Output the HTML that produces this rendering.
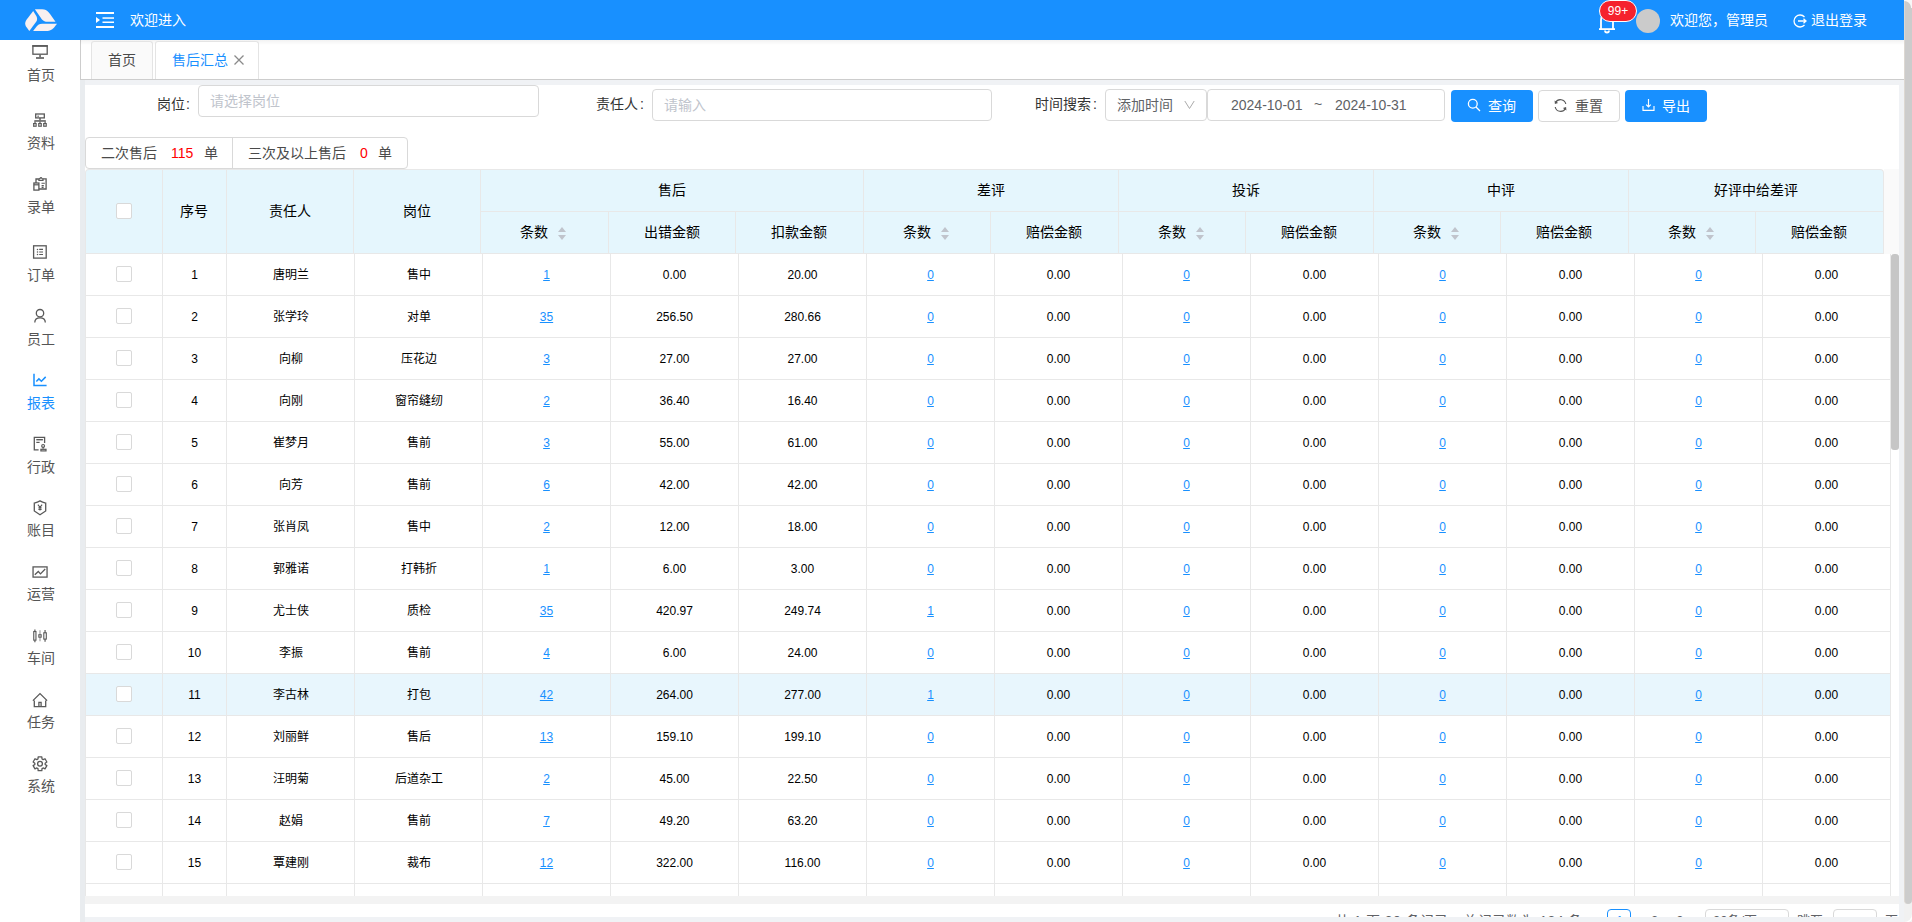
<!DOCTYPE html><html lang="zh-CN"><head><meta charset="utf-8"><style>
*{box-sizing:border-box;margin:0;padding:0}
html,body{width:1912px;height:922px;overflow:hidden}
body{position:relative;background:#f0f2f5;font-family:"Liberation Sans",sans-serif;font-size:14px;color:#000}
.a{position:absolute}
.hdr{left:0;top:0;width:1904px;height:40px;background:#1890ff;color:#fff}
.side{left:0;top:40px;width:80px;height:882px;background:#fff}
.tabs{left:80px;top:40px;width:1824px;height:40px;background:#fff;border-left:1px solid #cdcdcd;border-bottom:1px solid #cdcdcd}
.card{left:85px;top:85px;width:1814px;height:832px;background:#fff}
.txt{white-space:nowrap;line-height:1}
.inp{border:1px solid #d9d9d9;border-radius:4px;background:#fff}
.ph{color:#c0c4cc}
.btn{border-radius:4px;color:#fff;background:#1890ff;font-size:14px}
.lk{color:#1890ff;text-decoration:underline}
</style></head><body><div class="a hdr"></div><svg class="a" style="left:16px;top:0" width="44" height="40" viewBox="16 0 44 40"><g fill="#f9f0f0">
<path d="M33.2 11 L36.3 16 C37 17.2 37.1 18.2 37.1 19 C37.1 20.2 36.8 21 36.2 21.8 L29.3 31 L26.6 27.3 C25.7 26 25.2 24.8 25.2 23.4 C25.2 22 25.8 20.8 26.7 19.5 Z"/>
<path d="M34.85 9.2 L42.2 9.2 C45 9.2 47 10.4 48.6 12.2 C50 13.8 51 15.3 51.8 16.6 L55.5 21.7 L47.4 21.7 C45.3 21.7 43.5 21 42 19.4 C41.4 18.8 41 18.2 40.6 17.6 Z"/>
<path d="M33.1 31 L36.6 26.4 C37.8 24.9 39.3 23.7 42.2 23.7 L57 23.7 L54.3 27.2 C52.8 29 50.6 31 46 31 Z"/>
</g></svg><svg class="a" style="left:96px;top:12px" width="18" height="16" viewBox="0 0 18 16"><g fill="#fff">
<rect x="0" y="0" width="18" height="2"/><rect x="6.5" y="5.3" width="11.5" height="1.5"/><rect x="6.5" y="9.5" width="11.5" height="1.5"/><rect x="0" y="14" width="18" height="2"/>
<path d="M0 5 L4 8 L0 11 Z"/></g></svg><div class="a txt " style="left:130px;top:13px;color:#fff;font-size:14px">欢迎进入</div><svg class="a" style="left:1598px;top:10px" width="18" height="24" viewBox="0 0 18 24"><g fill="none" stroke="#fff" stroke-width="1.8">
<path d="M3 19 V10 C3 6 5.5 4 9 4 C12.5 4 15 6 15 10 V19"/><path d="M1 19.1 H17"/><path d="M7 20.5 A2 2 0 0 0 11 20.5"/></g></svg><div class="a " style="left:1599px;top:0px;width:38px;height:22px;background:#f5222d;border:1px solid #fff;border-radius:11px;color:#fff;font-size:12px;line-height:20px;text-align:center;font-weight:normal">99+</div><div class="a " style="left:1636px;top:9px;width:24px;height:24px;background:#cbcbcb;border-radius:50%"></div><div class="a txt " style="left:1670px;top:13px;color:#fff;font-size:14px">欢迎您，管理员</div><svg class="a" style="left:1792px;top:13px" width="16" height="16" viewBox="0 0 16 16"><g fill="none" stroke="#fff" stroke-width="1.3">
<path d="M12.5 4 A6 6 0 1 0 12.5 12"/><path d="M6 8 H14 M11.5 5.8 L14 8 L11.5 10.2"/></g></svg><div class="a txt " style="left:1811px;top:13px;color:#fff;font-size:14px">退出登录</div><div class="a " style="left:1904px;top:0px;width:8px;height:922px;background:#f1f1f1"></div><div class="a " style="left:1904px;top:0px;width:8px;height:904px;background:#cccccc;border-radius:0 0 4px 4px;border-left:1px solid #ddd8d2"></div><div class="a " style="left:1904px;top:0px;width:8px;height:8px;background:radial-gradient(circle at 0 8px, rgba(255,255,255,0) 6.5px, #f8f8f8 7.5px)"></div><div class="a " style="left:1904px;top:906px;width:8px;height:16px;background:#f1f1f1;border-radius:0 0 8px 0;box-shadow:1px 1px 0 #fff"></div><div class="a " style="left:0px;top:914px;width:8px;height:8px;background:radial-gradient(circle at 8px 0, #fff 6.5px, #e2e2e2 7.5px, #f6f6f6 8.5px)"></div><div class="a side"></div><svg class="a" style="left:0;top:0" width="80" height="800" viewBox="0 0 80 800"><g fill="none" stroke="#595959" stroke-width="1.3">
<rect x="32.9" y="45.8" width="14.3" height="8.4"/><path d="M32.3 46 H47.8" stroke-width="1.6"/>
<rect x="35.7" y="114" width="8.6" height="3.9"/><path d="M37.3 116.2 H39" stroke-width="1"/>
<path d="M35 121.5 V123.3 M40 121.5 V123.3 M45.1 121.5 V123.3" stroke-width="1.2"/>
<path d="M38.9 179 H36 V189 H46.1 V178.8 H43"/><path d="M38.9 180.4 H43 V179.2 C42.3 178.8 41.6 177.9 41 177.6 C40.4 177.9 39.7 178.8 38.9 179.2 Z" stroke-width="1.2"/>
<rect x="33.9" y="183" width="5" height="7.1" fill="#fff"/>
<path d="M41.5 183.2 H44.8 M41.6 185.6 H43.8 M41.6 187.4 H43.6" stroke-width="1.1"/>
<rect x="33.6" y="245.8" width="12.6" height="12.3"/>
<path d="M39.2 249.4 H43 M39.2 252 H43 M39.2 254.5 H43" stroke-width="1.1"/>
<circle cx="40" cy="313.2" r="3.7"/><path d="M34.8 322.6 C34.8 319.6 37 317.8 40 317.8 C43 317.8 45.3 319.6 45.3 322.6"/>
<path d="M34 373.8 V385.5 H46.6 M36.3 381.5 L38.9 378.9 L41.4 381.2 L45.7 376.9" stroke="#1890ff" stroke-width="1.5"/>
<path d="M44.6 442.9 V437.3 H34.3 V449.9 H38.6"/><circle cx="43.1" cy="445.9" r="1.4" stroke-width="1.2"/><path d="M43.1 447.3 V448.8" stroke-width="1.2"/><rect x="40.9" y="449.3" width="5.1" height="1.6" stroke-width="1.2"/>
<path d="M40 500.9 C38.5 501.8 36.5 502.6 34.3 503.1 V511 L40 514.8 L45.7 511 V503.1 C43.5 502.6 41.5 501.8 40 500.9 Z"/>
<path d="M37.9 504.6 L40 507.3 L42.1 504.6 M40 507.3 V510.6 M38.4 507.9 H41.6 M38.4 509.5 H41.6" stroke-width="1.1"/>
<rect x="33.05" y="566.9" width="14" height="10.2"/><path d="M34.8 574.7 L38.3 571.5 L40.5 573.9 L45.2 569"/>
<path d="M40 630.2 V641.3" stroke="#999" stroke-width="1.1"/>
<rect x="33.75" y="631.55" width="2.2" height="8.6" stroke-width="1.1"/><path d="M34.9 629.5 V631.6 M34.9 640.2 V642.3 M45.05 630 V632.9 M45.05 639 V641.8" stroke-width="1.2"/>
<rect x="38.85" y="634.75" width="2.3" height="2.4" fill="#fff" stroke-width="1.1"/><rect x="43.8" y="632.8" width="2.5" height="6.3" stroke-width="1.1"/>
<path d="M32.9 700.6 L40 693.6 L47.1 700.6 M34.3 700.4 V706.6 H45.7 V700.4 M38.9 706.6 V702.3 H41.1 V706.6"/>
<path d="M41.84 756.94 L38.16 756.94 L37.97 759.01 L36.87 759.65 L34.98 758.78 L33.14 761.96 L34.84 763.17 L34.84 764.43 L33.14 765.64 L34.98 768.82 L36.87 767.95 L37.97 768.59 L38.16 770.66 L41.84 770.66 L42.03 768.59 L43.13 767.95 L45.02 768.82 L46.86 765.64 L45.16 764.43 L45.16 763.17 L46.86 761.96 L45.02 758.78 L43.13 759.65 L42.03 759.01 Z" stroke-linejoin="round"/><circle cx="40" cy="763.8" r="2.4"/>
</g><g fill="#595959">
<rect x="39.3" y="54.8" width="1.5" height="2.4"/><rect x="36" y="57.2" width="8" height="1.6"/>
<rect x="39.3" y="118" width="1.4" height="2.3"/><rect x="34.3" y="120.2" width="11.5" height="1.5"/>
<rect x="33" y="123" width="3.7" height="3.8"/><rect x="38.15" y="123" width="3.7" height="3.8"/><rect x="43.1" y="123" width="3.7" height="3.8"/>
<rect x="33.9" y="184.2" width="5" height="1.2"/>
<circle cx="37.5" cy="249.4" r="0.75"/><circle cx="37.5" cy="252" r="0.75"/><circle cx="37.5" cy="254.5" r="0.75"/>
<rect x="36.3" y="439" width="6.6" height="1.4"/><rect x="36.3" y="441.8" width="3.3" height="1.2"/>
</g><g fill="#ddd"><rect x="33.8" y="124.3" width="2.1" height="1.2"/><rect x="38.95" y="124.3" width="2.1" height="1.2"/><rect x="43.9" y="124.3" width="2.1" height="1.2"/></g></svg><div class="a txt " style="left:0px;top:68px;width:81px;text-align:center;color:#555;font-size:14px">首页</div><div class="a txt " style="left:0px;top:136px;width:81px;text-align:center;color:#555;font-size:14px">资料</div><div class="a txt " style="left:0px;top:200px;width:81px;text-align:center;color:#555;font-size:14px">录单</div><div class="a txt " style="left:0px;top:268px;width:81px;text-align:center;color:#555;font-size:14px">订单</div><div class="a txt " style="left:0px;top:332px;width:81px;text-align:center;color:#555;font-size:14px">员工</div><div class="a txt " style="left:0px;top:396px;width:81px;text-align:center;color:#1890ff;font-size:14px">报表</div><div class="a txt " style="left:0px;top:460px;width:81px;text-align:center;color:#555;font-size:14px">行政</div><div class="a txt " style="left:0px;top:523px;width:81px;text-align:center;color:#555;font-size:14px">账目</div><div class="a txt " style="left:0px;top:587px;width:81px;text-align:center;color:#555;font-size:14px">运营</div><div class="a txt " style="left:0px;top:651px;width:81px;text-align:center;color:#555;font-size:14px">车间</div><div class="a txt " style="left:0px;top:715px;width:81px;text-align:center;color:#555;font-size:14px">任务</div><div class="a txt " style="left:0px;top:779px;width:81px;text-align:center;color:#555;font-size:14px">系统</div><div class="a tabs"></div><div class="a " style="left:80px;top:40px;width:1824px;height:5px;background:linear-gradient(rgba(0,0,0,0.05),rgba(0,0,0,0))"></div><div class="a " style="left:91px;top:41px;width:62px;height:38px;background:#fafafa;border:1px solid #e4e4e4;border-bottom:none;border-radius:3px 3px 0 0"></div><div class="a txt " style="left:108px;top:53px;color:#4a4a4a;font-size:14px">首页</div><div class="a " style="left:155px;top:41px;width:104px;height:38px;background:#fff;border:1px solid #e4e4e4;border-bottom:none;border-radius:3px 3px 0 0"></div><div class="a txt " style="left:172px;top:53px;color:#1890ff;font-size:14px">售后汇总</div><svg class="a" style="left:234px;top:55px" width="10" height="10" viewBox="0 0 10 10"><path d="M0.5 0.5 L9.5 9.5 M9.5 0.5 L0.5 9.5" stroke="#8a8a8a" stroke-width="1.3"/></svg><div class="a " style="left:80px;top:80px;width:5px;height:842px;background:#e9ecef"></div><div class="a card"></div><div class="a txt " style="left:157px;top:97px;color:#333;font-size:14px">岗位<span style="margin-left:1px">:</span></div><div class="a inp" style="left:198px;top:85px;width:341px;height:32px;"></div><div class="a txt ph" style="left:210px;top:94px;font-size:14px">请选择岗位</div><div class="a txt " style="left:596px;top:97px;color:#333;font-size:14px">责任人<span style="margin-left:2px">:</span></div><div class="a inp" style="left:652px;top:89px;width:340px;height:32px;"></div><div class="a txt ph" style="left:664px;top:98px;font-size:14px">请输入</div><div class="a txt " style="left:1035px;top:97px;color:#333;font-size:14px">时间搜索<span style="margin-left:2px">:</span></div><div class="a inp" style="left:1105px;top:89px;width:102px;height:32px;"></div><div class="a txt " style="left:1117px;top:98px;color:#606266;font-size:14px">添加时间</div><svg class="a" style="left:1184px;top:100px" width="11" height="10" viewBox="0 0 11 10"><path d="M0.8 1 L5.5 8.5 L10.2 1" fill="none" stroke="#aaa" stroke-width="1"/></svg><div class="a inp" style="left:1207px;top:89px;width:238px;height:32px;"></div><div class="a txt " style="left:1231px;top:98px;color:#606266;font-size:14px">2024-10-01</div><div class="a txt " style="left:1314px;top:97px;color:#606266;font-size:14px">~</div><div class="a txt " style="left:1335px;top:98px;color:#606266;font-size:14px">2024-10-31</div><div class="a btn" style="left:1451px;top:90px;width:82px;height:32px;"></div><svg class="a" style="left:1467px;top:98px" width="14" height="14" viewBox="0 0 14 14"><g fill="none" stroke="#fff" stroke-width="1.3"><circle cx="5.8" cy="5.8" r="4.4"/><path d="M9 9 L13 13"/></g></svg><div class="a txt " style="left:1488px;top:99px;color:#fff;font-size:14px">查询</div><div class="a " style="left:1538px;top:90px;width:82px;height:32px;background:#fff;border:1px solid #d9d9d9;border-radius:4px"></div><svg class="a" style="left:1553px;top:98px" width="15" height="15" viewBox="0 0 15 15"><g fill="none" stroke="#555" stroke-width="1.15"><path d="M12.8 6 A5.5 5.5 0 0 0 2.6 4.5"/><path d="M2.2 9 A5.5 5.5 0 0 0 12.4 10.5"/></g><path d="M1.6 2.6 L1.9 6 L5.1 5 Z M13.4 12.4 L13.1 9 L9.9 10 Z" fill="#555"/></svg><div class="a txt " style="left:1575px;top:99px;color:#555;font-size:14px">重置</div><div class="a btn" style="left:1625px;top:90px;width:82px;height:32px;"></div><svg class="a" style="left:1642px;top:98px" width="13" height="14" viewBox="0 0 13 14"><g fill="none" stroke="#fff" stroke-width="1.15"><path d="M6.5 1 V8.8 M4.2 6.6 L6.5 8.9 L8.8 6.6 M1 8 V12.4 H12 V8"/></g></svg><div class="a txt " style="left:1662px;top:99px;color:#fff;font-size:14px">导出</div><div class="a " style="left:85px;top:137px;width:323px;height:32px;border:1px solid #d9d9d9;border-radius:4px;background:#fff"></div><div class="a " style="left:232px;top:137px;width:1px;height:32px;background:#d9d9d9"></div><div class="a txt " style="left:101px;top:146px;color:#4a4a4a;font-size:14px">二次售后</div><div class="a txt " style="left:171px;top:146px;color:#f00;font-size:14px">115</div><div class="a txt " style="left:204px;top:146px;color:#4a4a4a;font-size:14px">单</div><div class="a txt " style="left:248px;top:146px;color:#4a4a4a;font-size:14px">三次及以上售后</div><div class="a txt " style="left:360px;top:146px;color:#f00;font-size:14px">0</div><div class="a txt " style="left:378px;top:146px;color:#4a4a4a;font-size:14px">单</div><div class="a" style="left:85px;top:169px;width:1799px;height:85px;background:#e5f6fd;border:1px solid #e8e8e8;border-bottom:none;border-radius:4px 4px 0 0"></div><div class="a" style="left:1884px;top:169px;width:15px;height:85px;background:#fafafa"></div><div class="a" style="left:85px;top:253px;width:1799px;height:1px;background:#e8e8e8"></div><div class="a" style="left:480px;top:211px;width:1403px;height:1px;background:#e8e8e8"></div><div class="a" style="left:162px;top:170px;width:1px;height:84px;background:#e8e8e8"></div><div class="a" style="left:226px;top:170px;width:1px;height:84px;background:#e8e8e8"></div><div class="a" style="left:353px;top:170px;width:1px;height:84px;background:#e8e8e8"></div><div class="a" style="left:480px;top:170px;width:1px;height:84px;background:#e8e8e8"></div><div class="a" style="left:863px;top:170px;width:1px;height:84px;background:#e8e8e8"></div><div class="a" style="left:1118px;top:170px;width:1px;height:84px;background:#e8e8e8"></div><div class="a" style="left:1373px;top:170px;width:1px;height:84px;background:#e8e8e8"></div><div class="a" style="left:1628px;top:170px;width:1px;height:84px;background:#e8e8e8"></div><div class="a" style="left:608px;top:212px;width:1px;height:42px;background:#e8e8e8"></div><div class="a" style="left:735px;top:212px;width:1px;height:42px;background:#e8e8e8"></div><div class="a" style="left:990px;top:212px;width:1px;height:42px;background:#e8e8e8"></div><div class="a" style="left:1245px;top:212px;width:1px;height:42px;background:#e8e8e8"></div><div class="a" style="left:1500px;top:212px;width:1px;height:42px;background:#e8e8e8"></div><div class="a" style="left:1755px;top:212px;width:1px;height:42px;background:#e8e8e8"></div><div class="a" style="left:116px;top:203px;width:16px;height:16px;background:#fff;border:1px solid #d9d9d9;border-radius:2px"></div><div class="a txt" style="left:162px;top:169px;width:64px;height:84px;display:flex;align-items:center;justify-content:center;font-size:14px;color:#000">序号</div><div class="a txt" style="left:226px;top:169px;width:127px;height:84px;display:flex;align-items:center;justify-content:center;font-size:14px;color:#000">责任人</div><div class="a txt" style="left:353px;top:169px;width:127px;height:84px;display:flex;align-items:center;justify-content:center;font-size:14px;color:#000">岗位</div><div class="a txt" style="left:480px;top:169px;width:383px;height:42px;display:flex;align-items:center;justify-content:center;font-size:14px;color:#000">售后</div><div class="a txt" style="left:863px;top:169px;width:255px;height:42px;display:flex;align-items:center;justify-content:center;font-size:14px;color:#000">差评</div><div class="a txt" style="left:1118px;top:169px;width:255px;height:42px;display:flex;align-items:center;justify-content:center;font-size:14px;color:#000">投诉</div><div class="a txt" style="left:1373px;top:169px;width:255px;height:42px;display:flex;align-items:center;justify-content:center;font-size:14px;color:#000">中评</div><div class="a txt" style="left:1628px;top:169px;width:255px;height:42px;display:flex;align-items:center;justify-content:center;font-size:14px;color:#000">好评中给差评</div><div class="a txt" style="left:480px;top:211px;width:128px;height:42px;display:flex;align-items:center;justify-content:center;font-size:14px;color:#000">条数<svg width="8" height="13" viewBox="0 0 8 13" style="margin-left:10px;margin-right:2px;margin-top:3px"><path d="M0 5 L4 0 L8 5 Z M0 8 L4 13 L8 8 Z" fill="#c0c4cc"/></svg></div><div class="a txt" style="left:608px;top:211px;width:127px;height:42px;display:flex;align-items:center;justify-content:center;font-size:14px;color:#000">出错金额</div><div class="a txt" style="left:735px;top:211px;width:128px;height:42px;display:flex;align-items:center;justify-content:center;font-size:14px;color:#000">扣款金额</div><div class="a txt" style="left:863px;top:211px;width:127px;height:42px;display:flex;align-items:center;justify-content:center;font-size:14px;color:#000">条数<svg width="8" height="13" viewBox="0 0 8 13" style="margin-left:10px;margin-right:2px;margin-top:3px"><path d="M0 5 L4 0 L8 5 Z M0 8 L4 13 L8 8 Z" fill="#c0c4cc"/></svg></div><div class="a txt" style="left:990px;top:211px;width:128px;height:42px;display:flex;align-items:center;justify-content:center;font-size:14px;color:#000">赔偿金额</div><div class="a txt" style="left:1118px;top:211px;width:127px;height:42px;display:flex;align-items:center;justify-content:center;font-size:14px;color:#000">条数<svg width="8" height="13" viewBox="0 0 8 13" style="margin-left:10px;margin-right:2px;margin-top:3px"><path d="M0 5 L4 0 L8 5 Z M0 8 L4 13 L8 8 Z" fill="#c0c4cc"/></svg></div><div class="a txt" style="left:1245px;top:211px;width:128px;height:42px;display:flex;align-items:center;justify-content:center;font-size:14px;color:#000">赔偿金额</div><div class="a txt" style="left:1373px;top:211px;width:127px;height:42px;display:flex;align-items:center;justify-content:center;font-size:14px;color:#000">条数<svg width="8" height="13" viewBox="0 0 8 13" style="margin-left:10px;margin-right:2px;margin-top:3px"><path d="M0 5 L4 0 L8 5 Z M0 8 L4 13 L8 8 Z" fill="#c0c4cc"/></svg></div><div class="a txt" style="left:1500px;top:211px;width:128px;height:42px;display:flex;align-items:center;justify-content:center;font-size:14px;color:#000">赔偿金额</div><div class="a txt" style="left:1628px;top:211px;width:127px;height:42px;display:flex;align-items:center;justify-content:center;font-size:14px;color:#000">条数<svg width="8" height="13" viewBox="0 0 8 13" style="margin-left:10px;margin-right:2px;margin-top:3px"><path d="M0 5 L4 0 L8 5 Z M0 8 L4 13 L8 8 Z" fill="#c0c4cc"/></svg></div><div class="a txt" style="left:1755px;top:211px;width:128px;height:42px;display:flex;align-items:center;justify-content:center;font-size:14px;color:#000">赔偿金额</div><div class="a" style="left:85px;top:295px;width:1806px;height:1px;background:#e8e8e8"></div><div class="a" style="left:116px;top:266px;width:16px;height:16px;background:#fff;border:1px solid #d9d9d9;border-radius:2px"></div><div class="a txt" style="left:162px;top:254px;width:64px;height:41px;display:flex;align-items:center;justify-content:center;font-size:12px;color:#000;padding-left:1px">1</div><div class="a txt" style="left:226px;top:254px;width:128px;height:41px;display:flex;align-items:center;justify-content:center;font-size:12px;color:#000;padding-left:1px">唐明兰</div><div class="a txt" style="left:354px;top:254px;width:128px;height:41px;display:flex;align-items:center;justify-content:center;font-size:12px;color:#000;padding-left:1px">售中</div><div class="a txt" style="left:482px;top:254px;width:128px;height:41px;display:flex;align-items:center;justify-content:center;font-size:12px;padding-left:1px"><span class="lk">1</span></div><div class="a txt" style="left:610px;top:254px;width:128px;height:41px;display:flex;align-items:center;justify-content:center;font-size:12px;color:#000;padding-left:1px">0.00</div><div class="a txt" style="left:738px;top:254px;width:128px;height:41px;display:flex;align-items:center;justify-content:center;font-size:12px;color:#000;padding-left:1px">20.00</div><div class="a txt" style="left:866px;top:254px;width:128px;height:41px;display:flex;align-items:center;justify-content:center;font-size:12px;padding-left:1px"><span class="lk">0</span></div><div class="a txt" style="left:994px;top:254px;width:128px;height:41px;display:flex;align-items:center;justify-content:center;font-size:12px;color:#000;padding-left:1px">0.00</div><div class="a txt" style="left:1122px;top:254px;width:128px;height:41px;display:flex;align-items:center;justify-content:center;font-size:12px;padding-left:1px"><span class="lk">0</span></div><div class="a txt" style="left:1250px;top:254px;width:128px;height:41px;display:flex;align-items:center;justify-content:center;font-size:12px;color:#000;padding-left:1px">0.00</div><div class="a txt" style="left:1378px;top:254px;width:128px;height:41px;display:flex;align-items:center;justify-content:center;font-size:12px;padding-left:1px"><span class="lk">0</span></div><div class="a txt" style="left:1506px;top:254px;width:128px;height:41px;display:flex;align-items:center;justify-content:center;font-size:12px;color:#000;padding-left:1px">0.00</div><div class="a txt" style="left:1634px;top:254px;width:128px;height:41px;display:flex;align-items:center;justify-content:center;font-size:12px;padding-left:1px"><span class="lk">0</span></div><div class="a txt" style="left:1762px;top:254px;width:128px;height:41px;display:flex;align-items:center;justify-content:center;font-size:12px;color:#000;padding-left:1px">0.00</div><div class="a" style="left:85px;top:337px;width:1806px;height:1px;background:#e8e8e8"></div><div class="a" style="left:116px;top:308px;width:16px;height:16px;background:#fff;border:1px solid #d9d9d9;border-radius:2px"></div><div class="a txt" style="left:162px;top:296px;width:64px;height:41px;display:flex;align-items:center;justify-content:center;font-size:12px;color:#000;padding-left:1px">2</div><div class="a txt" style="left:226px;top:296px;width:128px;height:41px;display:flex;align-items:center;justify-content:center;font-size:12px;color:#000;padding-left:1px">张学玲</div><div class="a txt" style="left:354px;top:296px;width:128px;height:41px;display:flex;align-items:center;justify-content:center;font-size:12px;color:#000;padding-left:1px">对单</div><div class="a txt" style="left:482px;top:296px;width:128px;height:41px;display:flex;align-items:center;justify-content:center;font-size:12px;padding-left:1px"><span class="lk">35</span></div><div class="a txt" style="left:610px;top:296px;width:128px;height:41px;display:flex;align-items:center;justify-content:center;font-size:12px;color:#000;padding-left:1px">256.50</div><div class="a txt" style="left:738px;top:296px;width:128px;height:41px;display:flex;align-items:center;justify-content:center;font-size:12px;color:#000;padding-left:1px">280.66</div><div class="a txt" style="left:866px;top:296px;width:128px;height:41px;display:flex;align-items:center;justify-content:center;font-size:12px;padding-left:1px"><span class="lk">0</span></div><div class="a txt" style="left:994px;top:296px;width:128px;height:41px;display:flex;align-items:center;justify-content:center;font-size:12px;color:#000;padding-left:1px">0.00</div><div class="a txt" style="left:1122px;top:296px;width:128px;height:41px;display:flex;align-items:center;justify-content:center;font-size:12px;padding-left:1px"><span class="lk">0</span></div><div class="a txt" style="left:1250px;top:296px;width:128px;height:41px;display:flex;align-items:center;justify-content:center;font-size:12px;color:#000;padding-left:1px">0.00</div><div class="a txt" style="left:1378px;top:296px;width:128px;height:41px;display:flex;align-items:center;justify-content:center;font-size:12px;padding-left:1px"><span class="lk">0</span></div><div class="a txt" style="left:1506px;top:296px;width:128px;height:41px;display:flex;align-items:center;justify-content:center;font-size:12px;color:#000;padding-left:1px">0.00</div><div class="a txt" style="left:1634px;top:296px;width:128px;height:41px;display:flex;align-items:center;justify-content:center;font-size:12px;padding-left:1px"><span class="lk">0</span></div><div class="a txt" style="left:1762px;top:296px;width:128px;height:41px;display:flex;align-items:center;justify-content:center;font-size:12px;color:#000;padding-left:1px">0.00</div><div class="a" style="left:85px;top:379px;width:1806px;height:1px;background:#e8e8e8"></div><div class="a" style="left:116px;top:350px;width:16px;height:16px;background:#fff;border:1px solid #d9d9d9;border-radius:2px"></div><div class="a txt" style="left:162px;top:338px;width:64px;height:41px;display:flex;align-items:center;justify-content:center;font-size:12px;color:#000;padding-left:1px">3</div><div class="a txt" style="left:226px;top:338px;width:128px;height:41px;display:flex;align-items:center;justify-content:center;font-size:12px;color:#000;padding-left:1px">向柳</div><div class="a txt" style="left:354px;top:338px;width:128px;height:41px;display:flex;align-items:center;justify-content:center;font-size:12px;color:#000;padding-left:1px">压花边</div><div class="a txt" style="left:482px;top:338px;width:128px;height:41px;display:flex;align-items:center;justify-content:center;font-size:12px;padding-left:1px"><span class="lk">3</span></div><div class="a txt" style="left:610px;top:338px;width:128px;height:41px;display:flex;align-items:center;justify-content:center;font-size:12px;color:#000;padding-left:1px">27.00</div><div class="a txt" style="left:738px;top:338px;width:128px;height:41px;display:flex;align-items:center;justify-content:center;font-size:12px;color:#000;padding-left:1px">27.00</div><div class="a txt" style="left:866px;top:338px;width:128px;height:41px;display:flex;align-items:center;justify-content:center;font-size:12px;padding-left:1px"><span class="lk">0</span></div><div class="a txt" style="left:994px;top:338px;width:128px;height:41px;display:flex;align-items:center;justify-content:center;font-size:12px;color:#000;padding-left:1px">0.00</div><div class="a txt" style="left:1122px;top:338px;width:128px;height:41px;display:flex;align-items:center;justify-content:center;font-size:12px;padding-left:1px"><span class="lk">0</span></div><div class="a txt" style="left:1250px;top:338px;width:128px;height:41px;display:flex;align-items:center;justify-content:center;font-size:12px;color:#000;padding-left:1px">0.00</div><div class="a txt" style="left:1378px;top:338px;width:128px;height:41px;display:flex;align-items:center;justify-content:center;font-size:12px;padding-left:1px"><span class="lk">0</span></div><div class="a txt" style="left:1506px;top:338px;width:128px;height:41px;display:flex;align-items:center;justify-content:center;font-size:12px;color:#000;padding-left:1px">0.00</div><div class="a txt" style="left:1634px;top:338px;width:128px;height:41px;display:flex;align-items:center;justify-content:center;font-size:12px;padding-left:1px"><span class="lk">0</span></div><div class="a txt" style="left:1762px;top:338px;width:128px;height:41px;display:flex;align-items:center;justify-content:center;font-size:12px;color:#000;padding-left:1px">0.00</div><div class="a" style="left:85px;top:421px;width:1806px;height:1px;background:#e8e8e8"></div><div class="a" style="left:116px;top:392px;width:16px;height:16px;background:#fff;border:1px solid #d9d9d9;border-radius:2px"></div><div class="a txt" style="left:162px;top:380px;width:64px;height:41px;display:flex;align-items:center;justify-content:center;font-size:12px;color:#000;padding-left:1px">4</div><div class="a txt" style="left:226px;top:380px;width:128px;height:41px;display:flex;align-items:center;justify-content:center;font-size:12px;color:#000;padding-left:1px">向刚</div><div class="a txt" style="left:354px;top:380px;width:128px;height:41px;display:flex;align-items:center;justify-content:center;font-size:12px;color:#000;padding-left:1px">窗帘缝纫</div><div class="a txt" style="left:482px;top:380px;width:128px;height:41px;display:flex;align-items:center;justify-content:center;font-size:12px;padding-left:1px"><span class="lk">2</span></div><div class="a txt" style="left:610px;top:380px;width:128px;height:41px;display:flex;align-items:center;justify-content:center;font-size:12px;color:#000;padding-left:1px">36.40</div><div class="a txt" style="left:738px;top:380px;width:128px;height:41px;display:flex;align-items:center;justify-content:center;font-size:12px;color:#000;padding-left:1px">16.40</div><div class="a txt" style="left:866px;top:380px;width:128px;height:41px;display:flex;align-items:center;justify-content:center;font-size:12px;padding-left:1px"><span class="lk">0</span></div><div class="a txt" style="left:994px;top:380px;width:128px;height:41px;display:flex;align-items:center;justify-content:center;font-size:12px;color:#000;padding-left:1px">0.00</div><div class="a txt" style="left:1122px;top:380px;width:128px;height:41px;display:flex;align-items:center;justify-content:center;font-size:12px;padding-left:1px"><span class="lk">0</span></div><div class="a txt" style="left:1250px;top:380px;width:128px;height:41px;display:flex;align-items:center;justify-content:center;font-size:12px;color:#000;padding-left:1px">0.00</div><div class="a txt" style="left:1378px;top:380px;width:128px;height:41px;display:flex;align-items:center;justify-content:center;font-size:12px;padding-left:1px"><span class="lk">0</span></div><div class="a txt" style="left:1506px;top:380px;width:128px;height:41px;display:flex;align-items:center;justify-content:center;font-size:12px;color:#000;padding-left:1px">0.00</div><div class="a txt" style="left:1634px;top:380px;width:128px;height:41px;display:flex;align-items:center;justify-content:center;font-size:12px;padding-left:1px"><span class="lk">0</span></div><div class="a txt" style="left:1762px;top:380px;width:128px;height:41px;display:flex;align-items:center;justify-content:center;font-size:12px;color:#000;padding-left:1px">0.00</div><div class="a" style="left:85px;top:463px;width:1806px;height:1px;background:#e8e8e8"></div><div class="a" style="left:116px;top:434px;width:16px;height:16px;background:#fff;border:1px solid #d9d9d9;border-radius:2px"></div><div class="a txt" style="left:162px;top:422px;width:64px;height:41px;display:flex;align-items:center;justify-content:center;font-size:12px;color:#000;padding-left:1px">5</div><div class="a txt" style="left:226px;top:422px;width:128px;height:41px;display:flex;align-items:center;justify-content:center;font-size:12px;color:#000;padding-left:1px">崔梦月</div><div class="a txt" style="left:354px;top:422px;width:128px;height:41px;display:flex;align-items:center;justify-content:center;font-size:12px;color:#000;padding-left:1px">售前</div><div class="a txt" style="left:482px;top:422px;width:128px;height:41px;display:flex;align-items:center;justify-content:center;font-size:12px;padding-left:1px"><span class="lk">3</span></div><div class="a txt" style="left:610px;top:422px;width:128px;height:41px;display:flex;align-items:center;justify-content:center;font-size:12px;color:#000;padding-left:1px">55.00</div><div class="a txt" style="left:738px;top:422px;width:128px;height:41px;display:flex;align-items:center;justify-content:center;font-size:12px;color:#000;padding-left:1px">61.00</div><div class="a txt" style="left:866px;top:422px;width:128px;height:41px;display:flex;align-items:center;justify-content:center;font-size:12px;padding-left:1px"><span class="lk">0</span></div><div class="a txt" style="left:994px;top:422px;width:128px;height:41px;display:flex;align-items:center;justify-content:center;font-size:12px;color:#000;padding-left:1px">0.00</div><div class="a txt" style="left:1122px;top:422px;width:128px;height:41px;display:flex;align-items:center;justify-content:center;font-size:12px;padding-left:1px"><span class="lk">0</span></div><div class="a txt" style="left:1250px;top:422px;width:128px;height:41px;display:flex;align-items:center;justify-content:center;font-size:12px;color:#000;padding-left:1px">0.00</div><div class="a txt" style="left:1378px;top:422px;width:128px;height:41px;display:flex;align-items:center;justify-content:center;font-size:12px;padding-left:1px"><span class="lk">0</span></div><div class="a txt" style="left:1506px;top:422px;width:128px;height:41px;display:flex;align-items:center;justify-content:center;font-size:12px;color:#000;padding-left:1px">0.00</div><div class="a txt" style="left:1634px;top:422px;width:128px;height:41px;display:flex;align-items:center;justify-content:center;font-size:12px;padding-left:1px"><span class="lk">0</span></div><div class="a txt" style="left:1762px;top:422px;width:128px;height:41px;display:flex;align-items:center;justify-content:center;font-size:12px;color:#000;padding-left:1px">0.00</div><div class="a" style="left:85px;top:505px;width:1806px;height:1px;background:#e8e8e8"></div><div class="a" style="left:116px;top:476px;width:16px;height:16px;background:#fff;border:1px solid #d9d9d9;border-radius:2px"></div><div class="a txt" style="left:162px;top:464px;width:64px;height:41px;display:flex;align-items:center;justify-content:center;font-size:12px;color:#000;padding-left:1px">6</div><div class="a txt" style="left:226px;top:464px;width:128px;height:41px;display:flex;align-items:center;justify-content:center;font-size:12px;color:#000;padding-left:1px">向芳</div><div class="a txt" style="left:354px;top:464px;width:128px;height:41px;display:flex;align-items:center;justify-content:center;font-size:12px;color:#000;padding-left:1px">售前</div><div class="a txt" style="left:482px;top:464px;width:128px;height:41px;display:flex;align-items:center;justify-content:center;font-size:12px;padding-left:1px"><span class="lk">6</span></div><div class="a txt" style="left:610px;top:464px;width:128px;height:41px;display:flex;align-items:center;justify-content:center;font-size:12px;color:#000;padding-left:1px">42.00</div><div class="a txt" style="left:738px;top:464px;width:128px;height:41px;display:flex;align-items:center;justify-content:center;font-size:12px;color:#000;padding-left:1px">42.00</div><div class="a txt" style="left:866px;top:464px;width:128px;height:41px;display:flex;align-items:center;justify-content:center;font-size:12px;padding-left:1px"><span class="lk">0</span></div><div class="a txt" style="left:994px;top:464px;width:128px;height:41px;display:flex;align-items:center;justify-content:center;font-size:12px;color:#000;padding-left:1px">0.00</div><div class="a txt" style="left:1122px;top:464px;width:128px;height:41px;display:flex;align-items:center;justify-content:center;font-size:12px;padding-left:1px"><span class="lk">0</span></div><div class="a txt" style="left:1250px;top:464px;width:128px;height:41px;display:flex;align-items:center;justify-content:center;font-size:12px;color:#000;padding-left:1px">0.00</div><div class="a txt" style="left:1378px;top:464px;width:128px;height:41px;display:flex;align-items:center;justify-content:center;font-size:12px;padding-left:1px"><span class="lk">0</span></div><div class="a txt" style="left:1506px;top:464px;width:128px;height:41px;display:flex;align-items:center;justify-content:center;font-size:12px;color:#000;padding-left:1px">0.00</div><div class="a txt" style="left:1634px;top:464px;width:128px;height:41px;display:flex;align-items:center;justify-content:center;font-size:12px;padding-left:1px"><span class="lk">0</span></div><div class="a txt" style="left:1762px;top:464px;width:128px;height:41px;display:flex;align-items:center;justify-content:center;font-size:12px;color:#000;padding-left:1px">0.00</div><div class="a" style="left:85px;top:547px;width:1806px;height:1px;background:#e8e8e8"></div><div class="a" style="left:116px;top:518px;width:16px;height:16px;background:#fff;border:1px solid #d9d9d9;border-radius:2px"></div><div class="a txt" style="left:162px;top:506px;width:64px;height:41px;display:flex;align-items:center;justify-content:center;font-size:12px;color:#000;padding-left:1px">7</div><div class="a txt" style="left:226px;top:506px;width:128px;height:41px;display:flex;align-items:center;justify-content:center;font-size:12px;color:#000;padding-left:1px">张肖凤</div><div class="a txt" style="left:354px;top:506px;width:128px;height:41px;display:flex;align-items:center;justify-content:center;font-size:12px;color:#000;padding-left:1px">售中</div><div class="a txt" style="left:482px;top:506px;width:128px;height:41px;display:flex;align-items:center;justify-content:center;font-size:12px;padding-left:1px"><span class="lk">2</span></div><div class="a txt" style="left:610px;top:506px;width:128px;height:41px;display:flex;align-items:center;justify-content:center;font-size:12px;color:#000;padding-left:1px">12.00</div><div class="a txt" style="left:738px;top:506px;width:128px;height:41px;display:flex;align-items:center;justify-content:center;font-size:12px;color:#000;padding-left:1px">18.00</div><div class="a txt" style="left:866px;top:506px;width:128px;height:41px;display:flex;align-items:center;justify-content:center;font-size:12px;padding-left:1px"><span class="lk">0</span></div><div class="a txt" style="left:994px;top:506px;width:128px;height:41px;display:flex;align-items:center;justify-content:center;font-size:12px;color:#000;padding-left:1px">0.00</div><div class="a txt" style="left:1122px;top:506px;width:128px;height:41px;display:flex;align-items:center;justify-content:center;font-size:12px;padding-left:1px"><span class="lk">0</span></div><div class="a txt" style="left:1250px;top:506px;width:128px;height:41px;display:flex;align-items:center;justify-content:center;font-size:12px;color:#000;padding-left:1px">0.00</div><div class="a txt" style="left:1378px;top:506px;width:128px;height:41px;display:flex;align-items:center;justify-content:center;font-size:12px;padding-left:1px"><span class="lk">0</span></div><div class="a txt" style="left:1506px;top:506px;width:128px;height:41px;display:flex;align-items:center;justify-content:center;font-size:12px;color:#000;padding-left:1px">0.00</div><div class="a txt" style="left:1634px;top:506px;width:128px;height:41px;display:flex;align-items:center;justify-content:center;font-size:12px;padding-left:1px"><span class="lk">0</span></div><div class="a txt" style="left:1762px;top:506px;width:128px;height:41px;display:flex;align-items:center;justify-content:center;font-size:12px;color:#000;padding-left:1px">0.00</div><div class="a" style="left:85px;top:589px;width:1806px;height:1px;background:#e8e8e8"></div><div class="a" style="left:116px;top:560px;width:16px;height:16px;background:#fff;border:1px solid #d9d9d9;border-radius:2px"></div><div class="a txt" style="left:162px;top:548px;width:64px;height:41px;display:flex;align-items:center;justify-content:center;font-size:12px;color:#000;padding-left:1px">8</div><div class="a txt" style="left:226px;top:548px;width:128px;height:41px;display:flex;align-items:center;justify-content:center;font-size:12px;color:#000;padding-left:1px">郭雅诺</div><div class="a txt" style="left:354px;top:548px;width:128px;height:41px;display:flex;align-items:center;justify-content:center;font-size:12px;color:#000;padding-left:1px">打韩折</div><div class="a txt" style="left:482px;top:548px;width:128px;height:41px;display:flex;align-items:center;justify-content:center;font-size:12px;padding-left:1px"><span class="lk">1</span></div><div class="a txt" style="left:610px;top:548px;width:128px;height:41px;display:flex;align-items:center;justify-content:center;font-size:12px;color:#000;padding-left:1px">6.00</div><div class="a txt" style="left:738px;top:548px;width:128px;height:41px;display:flex;align-items:center;justify-content:center;font-size:12px;color:#000;padding-left:1px">3.00</div><div class="a txt" style="left:866px;top:548px;width:128px;height:41px;display:flex;align-items:center;justify-content:center;font-size:12px;padding-left:1px"><span class="lk">0</span></div><div class="a txt" style="left:994px;top:548px;width:128px;height:41px;display:flex;align-items:center;justify-content:center;font-size:12px;color:#000;padding-left:1px">0.00</div><div class="a txt" style="left:1122px;top:548px;width:128px;height:41px;display:flex;align-items:center;justify-content:center;font-size:12px;padding-left:1px"><span class="lk">0</span></div><div class="a txt" style="left:1250px;top:548px;width:128px;height:41px;display:flex;align-items:center;justify-content:center;font-size:12px;color:#000;padding-left:1px">0.00</div><div class="a txt" style="left:1378px;top:548px;width:128px;height:41px;display:flex;align-items:center;justify-content:center;font-size:12px;padding-left:1px"><span class="lk">0</span></div><div class="a txt" style="left:1506px;top:548px;width:128px;height:41px;display:flex;align-items:center;justify-content:center;font-size:12px;color:#000;padding-left:1px">0.00</div><div class="a txt" style="left:1634px;top:548px;width:128px;height:41px;display:flex;align-items:center;justify-content:center;font-size:12px;padding-left:1px"><span class="lk">0</span></div><div class="a txt" style="left:1762px;top:548px;width:128px;height:41px;display:flex;align-items:center;justify-content:center;font-size:12px;color:#000;padding-left:1px">0.00</div><div class="a" style="left:85px;top:631px;width:1806px;height:1px;background:#e8e8e8"></div><div class="a" style="left:116px;top:602px;width:16px;height:16px;background:#fff;border:1px solid #d9d9d9;border-radius:2px"></div><div class="a txt" style="left:162px;top:590px;width:64px;height:41px;display:flex;align-items:center;justify-content:center;font-size:12px;color:#000;padding-left:1px">9</div><div class="a txt" style="left:226px;top:590px;width:128px;height:41px;display:flex;align-items:center;justify-content:center;font-size:12px;color:#000;padding-left:1px">尤士侠</div><div class="a txt" style="left:354px;top:590px;width:128px;height:41px;display:flex;align-items:center;justify-content:center;font-size:12px;color:#000;padding-left:1px">质检</div><div class="a txt" style="left:482px;top:590px;width:128px;height:41px;display:flex;align-items:center;justify-content:center;font-size:12px;padding-left:1px"><span class="lk">35</span></div><div class="a txt" style="left:610px;top:590px;width:128px;height:41px;display:flex;align-items:center;justify-content:center;font-size:12px;color:#000;padding-left:1px">420.97</div><div class="a txt" style="left:738px;top:590px;width:128px;height:41px;display:flex;align-items:center;justify-content:center;font-size:12px;color:#000;padding-left:1px">249.74</div><div class="a txt" style="left:866px;top:590px;width:128px;height:41px;display:flex;align-items:center;justify-content:center;font-size:12px;padding-left:1px"><span class="lk">1</span></div><div class="a txt" style="left:994px;top:590px;width:128px;height:41px;display:flex;align-items:center;justify-content:center;font-size:12px;color:#000;padding-left:1px">0.00</div><div class="a txt" style="left:1122px;top:590px;width:128px;height:41px;display:flex;align-items:center;justify-content:center;font-size:12px;padding-left:1px"><span class="lk">0</span></div><div class="a txt" style="left:1250px;top:590px;width:128px;height:41px;display:flex;align-items:center;justify-content:center;font-size:12px;color:#000;padding-left:1px">0.00</div><div class="a txt" style="left:1378px;top:590px;width:128px;height:41px;display:flex;align-items:center;justify-content:center;font-size:12px;padding-left:1px"><span class="lk">0</span></div><div class="a txt" style="left:1506px;top:590px;width:128px;height:41px;display:flex;align-items:center;justify-content:center;font-size:12px;color:#000;padding-left:1px">0.00</div><div class="a txt" style="left:1634px;top:590px;width:128px;height:41px;display:flex;align-items:center;justify-content:center;font-size:12px;padding-left:1px"><span class="lk">0</span></div><div class="a txt" style="left:1762px;top:590px;width:128px;height:41px;display:flex;align-items:center;justify-content:center;font-size:12px;color:#000;padding-left:1px">0.00</div><div class="a" style="left:85px;top:673px;width:1806px;height:1px;background:#e8e8e8"></div><div class="a" style="left:116px;top:644px;width:16px;height:16px;background:#fff;border:1px solid #d9d9d9;border-radius:2px"></div><div class="a txt" style="left:162px;top:632px;width:64px;height:41px;display:flex;align-items:center;justify-content:center;font-size:12px;color:#000;padding-left:1px">10</div><div class="a txt" style="left:226px;top:632px;width:128px;height:41px;display:flex;align-items:center;justify-content:center;font-size:12px;color:#000;padding-left:1px">李振</div><div class="a txt" style="left:354px;top:632px;width:128px;height:41px;display:flex;align-items:center;justify-content:center;font-size:12px;color:#000;padding-left:1px">售前</div><div class="a txt" style="left:482px;top:632px;width:128px;height:41px;display:flex;align-items:center;justify-content:center;font-size:12px;padding-left:1px"><span class="lk">4</span></div><div class="a txt" style="left:610px;top:632px;width:128px;height:41px;display:flex;align-items:center;justify-content:center;font-size:12px;color:#000;padding-left:1px">6.00</div><div class="a txt" style="left:738px;top:632px;width:128px;height:41px;display:flex;align-items:center;justify-content:center;font-size:12px;color:#000;padding-left:1px">24.00</div><div class="a txt" style="left:866px;top:632px;width:128px;height:41px;display:flex;align-items:center;justify-content:center;font-size:12px;padding-left:1px"><span class="lk">0</span></div><div class="a txt" style="left:994px;top:632px;width:128px;height:41px;display:flex;align-items:center;justify-content:center;font-size:12px;color:#000;padding-left:1px">0.00</div><div class="a txt" style="left:1122px;top:632px;width:128px;height:41px;display:flex;align-items:center;justify-content:center;font-size:12px;padding-left:1px"><span class="lk">0</span></div><div class="a txt" style="left:1250px;top:632px;width:128px;height:41px;display:flex;align-items:center;justify-content:center;font-size:12px;color:#000;padding-left:1px">0.00</div><div class="a txt" style="left:1378px;top:632px;width:128px;height:41px;display:flex;align-items:center;justify-content:center;font-size:12px;padding-left:1px"><span class="lk">0</span></div><div class="a txt" style="left:1506px;top:632px;width:128px;height:41px;display:flex;align-items:center;justify-content:center;font-size:12px;color:#000;padding-left:1px">0.00</div><div class="a txt" style="left:1634px;top:632px;width:128px;height:41px;display:flex;align-items:center;justify-content:center;font-size:12px;padding-left:1px"><span class="lk">0</span></div><div class="a txt" style="left:1762px;top:632px;width:128px;height:41px;display:flex;align-items:center;justify-content:center;font-size:12px;color:#000;padding-left:1px">0.00</div><div class="a" style="left:85px;top:674px;width:1806px;height:41px;background:#e8f6fd"></div><div class="a" style="left:85px;top:715px;width:1806px;height:1px;background:#e8e8e8"></div><div class="a" style="left:116px;top:686px;width:16px;height:16px;background:#fff;border:1px solid #d9d9d9;border-radius:2px"></div><div class="a txt" style="left:162px;top:674px;width:64px;height:41px;display:flex;align-items:center;justify-content:center;font-size:12px;color:#000;padding-left:1px">11</div><div class="a txt" style="left:226px;top:674px;width:128px;height:41px;display:flex;align-items:center;justify-content:center;font-size:12px;color:#000;padding-left:1px">李古林</div><div class="a txt" style="left:354px;top:674px;width:128px;height:41px;display:flex;align-items:center;justify-content:center;font-size:12px;color:#000;padding-left:1px">打包</div><div class="a txt" style="left:482px;top:674px;width:128px;height:41px;display:flex;align-items:center;justify-content:center;font-size:12px;padding-left:1px"><span class="lk">42</span></div><div class="a txt" style="left:610px;top:674px;width:128px;height:41px;display:flex;align-items:center;justify-content:center;font-size:12px;color:#000;padding-left:1px">264.00</div><div class="a txt" style="left:738px;top:674px;width:128px;height:41px;display:flex;align-items:center;justify-content:center;font-size:12px;color:#000;padding-left:1px">277.00</div><div class="a txt" style="left:866px;top:674px;width:128px;height:41px;display:flex;align-items:center;justify-content:center;font-size:12px;padding-left:1px"><span class="lk">1</span></div><div class="a txt" style="left:994px;top:674px;width:128px;height:41px;display:flex;align-items:center;justify-content:center;font-size:12px;color:#000;padding-left:1px">0.00</div><div class="a txt" style="left:1122px;top:674px;width:128px;height:41px;display:flex;align-items:center;justify-content:center;font-size:12px;padding-left:1px"><span class="lk">0</span></div><div class="a txt" style="left:1250px;top:674px;width:128px;height:41px;display:flex;align-items:center;justify-content:center;font-size:12px;color:#000;padding-left:1px">0.00</div><div class="a txt" style="left:1378px;top:674px;width:128px;height:41px;display:flex;align-items:center;justify-content:center;font-size:12px;padding-left:1px"><span class="lk">0</span></div><div class="a txt" style="left:1506px;top:674px;width:128px;height:41px;display:flex;align-items:center;justify-content:center;font-size:12px;color:#000;padding-left:1px">0.00</div><div class="a txt" style="left:1634px;top:674px;width:128px;height:41px;display:flex;align-items:center;justify-content:center;font-size:12px;padding-left:1px"><span class="lk">0</span></div><div class="a txt" style="left:1762px;top:674px;width:128px;height:41px;display:flex;align-items:center;justify-content:center;font-size:12px;color:#000;padding-left:1px">0.00</div><div class="a" style="left:85px;top:757px;width:1806px;height:1px;background:#e8e8e8"></div><div class="a" style="left:116px;top:728px;width:16px;height:16px;background:#fff;border:1px solid #d9d9d9;border-radius:2px"></div><div class="a txt" style="left:162px;top:716px;width:64px;height:41px;display:flex;align-items:center;justify-content:center;font-size:12px;color:#000;padding-left:1px">12</div><div class="a txt" style="left:226px;top:716px;width:128px;height:41px;display:flex;align-items:center;justify-content:center;font-size:12px;color:#000;padding-left:1px">刘丽鲜</div><div class="a txt" style="left:354px;top:716px;width:128px;height:41px;display:flex;align-items:center;justify-content:center;font-size:12px;color:#000;padding-left:1px">售后</div><div class="a txt" style="left:482px;top:716px;width:128px;height:41px;display:flex;align-items:center;justify-content:center;font-size:12px;padding-left:1px"><span class="lk">13</span></div><div class="a txt" style="left:610px;top:716px;width:128px;height:41px;display:flex;align-items:center;justify-content:center;font-size:12px;color:#000;padding-left:1px">159.10</div><div class="a txt" style="left:738px;top:716px;width:128px;height:41px;display:flex;align-items:center;justify-content:center;font-size:12px;color:#000;padding-left:1px">199.10</div><div class="a txt" style="left:866px;top:716px;width:128px;height:41px;display:flex;align-items:center;justify-content:center;font-size:12px;padding-left:1px"><span class="lk">0</span></div><div class="a txt" style="left:994px;top:716px;width:128px;height:41px;display:flex;align-items:center;justify-content:center;font-size:12px;color:#000;padding-left:1px">0.00</div><div class="a txt" style="left:1122px;top:716px;width:128px;height:41px;display:flex;align-items:center;justify-content:center;font-size:12px;padding-left:1px"><span class="lk">0</span></div><div class="a txt" style="left:1250px;top:716px;width:128px;height:41px;display:flex;align-items:center;justify-content:center;font-size:12px;color:#000;padding-left:1px">0.00</div><div class="a txt" style="left:1378px;top:716px;width:128px;height:41px;display:flex;align-items:center;justify-content:center;font-size:12px;padding-left:1px"><span class="lk">0</span></div><div class="a txt" style="left:1506px;top:716px;width:128px;height:41px;display:flex;align-items:center;justify-content:center;font-size:12px;color:#000;padding-left:1px">0.00</div><div class="a txt" style="left:1634px;top:716px;width:128px;height:41px;display:flex;align-items:center;justify-content:center;font-size:12px;padding-left:1px"><span class="lk">0</span></div><div class="a txt" style="left:1762px;top:716px;width:128px;height:41px;display:flex;align-items:center;justify-content:center;font-size:12px;color:#000;padding-left:1px">0.00</div><div class="a" style="left:85px;top:799px;width:1806px;height:1px;background:#e8e8e8"></div><div class="a" style="left:116px;top:770px;width:16px;height:16px;background:#fff;border:1px solid #d9d9d9;border-radius:2px"></div><div class="a txt" style="left:162px;top:758px;width:64px;height:41px;display:flex;align-items:center;justify-content:center;font-size:12px;color:#000;padding-left:1px">13</div><div class="a txt" style="left:226px;top:758px;width:128px;height:41px;display:flex;align-items:center;justify-content:center;font-size:12px;color:#000;padding-left:1px">汪明菊</div><div class="a txt" style="left:354px;top:758px;width:128px;height:41px;display:flex;align-items:center;justify-content:center;font-size:12px;color:#000;padding-left:1px">后道杂工</div><div class="a txt" style="left:482px;top:758px;width:128px;height:41px;display:flex;align-items:center;justify-content:center;font-size:12px;padding-left:1px"><span class="lk">2</span></div><div class="a txt" style="left:610px;top:758px;width:128px;height:41px;display:flex;align-items:center;justify-content:center;font-size:12px;color:#000;padding-left:1px">45.00</div><div class="a txt" style="left:738px;top:758px;width:128px;height:41px;display:flex;align-items:center;justify-content:center;font-size:12px;color:#000;padding-left:1px">22.50</div><div class="a txt" style="left:866px;top:758px;width:128px;height:41px;display:flex;align-items:center;justify-content:center;font-size:12px;padding-left:1px"><span class="lk">0</span></div><div class="a txt" style="left:994px;top:758px;width:128px;height:41px;display:flex;align-items:center;justify-content:center;font-size:12px;color:#000;padding-left:1px">0.00</div><div class="a txt" style="left:1122px;top:758px;width:128px;height:41px;display:flex;align-items:center;justify-content:center;font-size:12px;padding-left:1px"><span class="lk">0</span></div><div class="a txt" style="left:1250px;top:758px;width:128px;height:41px;display:flex;align-items:center;justify-content:center;font-size:12px;color:#000;padding-left:1px">0.00</div><div class="a txt" style="left:1378px;top:758px;width:128px;height:41px;display:flex;align-items:center;justify-content:center;font-size:12px;padding-left:1px"><span class="lk">0</span></div><div class="a txt" style="left:1506px;top:758px;width:128px;height:41px;display:flex;align-items:center;justify-content:center;font-size:12px;color:#000;padding-left:1px">0.00</div><div class="a txt" style="left:1634px;top:758px;width:128px;height:41px;display:flex;align-items:center;justify-content:center;font-size:12px;padding-left:1px"><span class="lk">0</span></div><div class="a txt" style="left:1762px;top:758px;width:128px;height:41px;display:flex;align-items:center;justify-content:center;font-size:12px;color:#000;padding-left:1px">0.00</div><div class="a" style="left:85px;top:841px;width:1806px;height:1px;background:#e8e8e8"></div><div class="a" style="left:116px;top:812px;width:16px;height:16px;background:#fff;border:1px solid #d9d9d9;border-radius:2px"></div><div class="a txt" style="left:162px;top:800px;width:64px;height:41px;display:flex;align-items:center;justify-content:center;font-size:12px;color:#000;padding-left:1px">14</div><div class="a txt" style="left:226px;top:800px;width:128px;height:41px;display:flex;align-items:center;justify-content:center;font-size:12px;color:#000;padding-left:1px">赵娟</div><div class="a txt" style="left:354px;top:800px;width:128px;height:41px;display:flex;align-items:center;justify-content:center;font-size:12px;color:#000;padding-left:1px">售前</div><div class="a txt" style="left:482px;top:800px;width:128px;height:41px;display:flex;align-items:center;justify-content:center;font-size:12px;padding-left:1px"><span class="lk">7</span></div><div class="a txt" style="left:610px;top:800px;width:128px;height:41px;display:flex;align-items:center;justify-content:center;font-size:12px;color:#000;padding-left:1px">49.20</div><div class="a txt" style="left:738px;top:800px;width:128px;height:41px;display:flex;align-items:center;justify-content:center;font-size:12px;color:#000;padding-left:1px">63.20</div><div class="a txt" style="left:866px;top:800px;width:128px;height:41px;display:flex;align-items:center;justify-content:center;font-size:12px;padding-left:1px"><span class="lk">0</span></div><div class="a txt" style="left:994px;top:800px;width:128px;height:41px;display:flex;align-items:center;justify-content:center;font-size:12px;color:#000;padding-left:1px">0.00</div><div class="a txt" style="left:1122px;top:800px;width:128px;height:41px;display:flex;align-items:center;justify-content:center;font-size:12px;padding-left:1px"><span class="lk">0</span></div><div class="a txt" style="left:1250px;top:800px;width:128px;height:41px;display:flex;align-items:center;justify-content:center;font-size:12px;color:#000;padding-left:1px">0.00</div><div class="a txt" style="left:1378px;top:800px;width:128px;height:41px;display:flex;align-items:center;justify-content:center;font-size:12px;padding-left:1px"><span class="lk">0</span></div><div class="a txt" style="left:1506px;top:800px;width:128px;height:41px;display:flex;align-items:center;justify-content:center;font-size:12px;color:#000;padding-left:1px">0.00</div><div class="a txt" style="left:1634px;top:800px;width:128px;height:41px;display:flex;align-items:center;justify-content:center;font-size:12px;padding-left:1px"><span class="lk">0</span></div><div class="a txt" style="left:1762px;top:800px;width:128px;height:41px;display:flex;align-items:center;justify-content:center;font-size:12px;color:#000;padding-left:1px">0.00</div><div class="a" style="left:85px;top:883px;width:1806px;height:1px;background:#e8e8e8"></div><div class="a" style="left:116px;top:854px;width:16px;height:16px;background:#fff;border:1px solid #d9d9d9;border-radius:2px"></div><div class="a txt" style="left:162px;top:842px;width:64px;height:41px;display:flex;align-items:center;justify-content:center;font-size:12px;color:#000;padding-left:1px">15</div><div class="a txt" style="left:226px;top:842px;width:128px;height:41px;display:flex;align-items:center;justify-content:center;font-size:12px;color:#000;padding-left:1px">覃建刚</div><div class="a txt" style="left:354px;top:842px;width:128px;height:41px;display:flex;align-items:center;justify-content:center;font-size:12px;color:#000;padding-left:1px">裁布</div><div class="a txt" style="left:482px;top:842px;width:128px;height:41px;display:flex;align-items:center;justify-content:center;font-size:12px;padding-left:1px"><span class="lk">12</span></div><div class="a txt" style="left:610px;top:842px;width:128px;height:41px;display:flex;align-items:center;justify-content:center;font-size:12px;color:#000;padding-left:1px">322.00</div><div class="a txt" style="left:738px;top:842px;width:128px;height:41px;display:flex;align-items:center;justify-content:center;font-size:12px;color:#000;padding-left:1px">116.00</div><div class="a txt" style="left:866px;top:842px;width:128px;height:41px;display:flex;align-items:center;justify-content:center;font-size:12px;padding-left:1px"><span class="lk">0</span></div><div class="a txt" style="left:994px;top:842px;width:128px;height:41px;display:flex;align-items:center;justify-content:center;font-size:12px;color:#000;padding-left:1px">0.00</div><div class="a txt" style="left:1122px;top:842px;width:128px;height:41px;display:flex;align-items:center;justify-content:center;font-size:12px;padding-left:1px"><span class="lk">0</span></div><div class="a txt" style="left:1250px;top:842px;width:128px;height:41px;display:flex;align-items:center;justify-content:center;font-size:12px;color:#000;padding-left:1px">0.00</div><div class="a txt" style="left:1378px;top:842px;width:128px;height:41px;display:flex;align-items:center;justify-content:center;font-size:12px;padding-left:1px"><span class="lk">0</span></div><div class="a txt" style="left:1506px;top:842px;width:128px;height:41px;display:flex;align-items:center;justify-content:center;font-size:12px;color:#000;padding-left:1px">0.00</div><div class="a txt" style="left:1634px;top:842px;width:128px;height:41px;display:flex;align-items:center;justify-content:center;font-size:12px;padding-left:1px"><span class="lk">0</span></div><div class="a txt" style="left:1762px;top:842px;width:128px;height:41px;display:flex;align-items:center;justify-content:center;font-size:12px;color:#000;padding-left:1px">0.00</div><div class="a" style="left:85px;top:254px;width:1px;height:642px;background:#e8e8e8"></div><div class="a" style="left:162px;top:254px;width:1px;height:642px;background:#e8e8e8"></div><div class="a" style="left:226px;top:254px;width:1px;height:642px;background:#e8e8e8"></div><div class="a" style="left:354px;top:254px;width:1px;height:642px;background:#e8e8e8"></div><div class="a" style="left:482px;top:254px;width:1px;height:642px;background:#e8e8e8"></div><div class="a" style="left:610px;top:254px;width:1px;height:642px;background:#e8e8e8"></div><div class="a" style="left:738px;top:254px;width:1px;height:642px;background:#e8e8e8"></div><div class="a" style="left:866px;top:254px;width:1px;height:642px;background:#e8e8e8"></div><div class="a" style="left:994px;top:254px;width:1px;height:642px;background:#e8e8e8"></div><div class="a" style="left:1122px;top:254px;width:1px;height:642px;background:#e8e8e8"></div><div class="a" style="left:1250px;top:254px;width:1px;height:642px;background:#e8e8e8"></div><div class="a" style="left:1378px;top:254px;width:1px;height:642px;background:#e8e8e8"></div><div class="a" style="left:1506px;top:254px;width:1px;height:642px;background:#e8e8e8"></div><div class="a" style="left:1634px;top:254px;width:1px;height:642px;background:#e8e8e8"></div><div class="a" style="left:1762px;top:254px;width:1px;height:642px;background:#e8e8e8"></div><div class="a" style="left:1890px;top:254px;width:1px;height:642px;background:#e8e8e8"></div><div class="a" style="left:1891px;top:254px;width:8px;height:642px;background:#fff"></div><div class="a" style="left:1891px;top:254px;width:8px;height:196px;background:#c6c6c6;border-radius:3px"></div><div class="a" style="left:85px;top:896px;width:1814px;height:8px;background:#f3f3f3"></div><div class="a" style="left:85px;top:904px;width:1814px;height:13px;background:#fff;overflow:hidden"><div class="a txt" style="left:1250px;top:10px;font-size:14px;color:#606266;letter-spacing:0.4px">共 1 页 30 条记录，总记录数为 134 条</div><div class="a" style="left:1522px;top:5px;width:24px;height:24px;border:1px solid #1890ff;border-radius:4px"></div><div class="a txt" style="left:1531px;top:10px;font-size:13px;color:#1890ff">1</div><div class="a txt" style="left:1566px;top:10px;font-size:13px;color:#606266">2 &nbsp; &nbsp; 3</div><div class="a" style="left:1620px;top:5px;width:84px;height:24px;border:1px solid #d9d9d9;border-radius:4px"></div><div class="a txt" style="left:1628px;top:10px;font-size:13px;color:#606266">30条/页</div><div class="a txt" style="left:1712px;top:10px;font-size:13px;color:#606266">跳至</div><div class="a" style="left:1748px;top:5px;width:44px;height:24px;border:1px solid #d9d9d9;border-radius:4px"></div><div class="a txt" style="left:1800px;top:10px;font-size:13px;color:#606266">页</div></div></body></html>
